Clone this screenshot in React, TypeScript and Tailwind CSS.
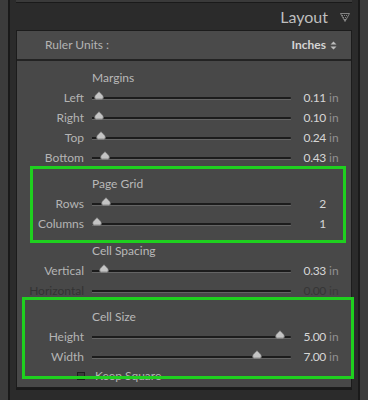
import React from "react";

type Row = { label: string; pos?: number; value: string; unit?: boolean; dim?: boolean };

const font = { fontFamily: "Lato, 'Liberation Sans', sans-serif" };

function Thumb() {
  return (
    <svg width="10" height="9" viewBox="0 0 10 9" className="absolute" style={{ top: -6 }}>
      <path d="M5 0.5 C6.5 2.5 9.5 4 9.5 6.2 Q9.5 8.5 7.5 8.5 L2.5 8.5 Q0.5 8.5 0.5 6.2 C0.5 4 3.5 2.5 5 0.5Z" fill="#c4c4c4" stroke="#5a5a5a" strokeWidth="0.6" />
      <path d="M1 6.5 Q1 8 2.5 8 L7.5 8 Q9 8 9 6.5" fill="none" stroke="#8a8a8a" strokeWidth="1" />
    </svg>
  );
}

function SliderRow({ label, pos, value, unit = true, dim = false }: Row) {
  return (
    <div className="flex h-[20px] shrink-0 items-center">
      <div className={`w-[67px] text-right text-[12px] ${dim ? "text-[#333333]" : "text-[#b4b4b4]"}`}>{label}</div>
      <div className="relative ml-[8px] h-[3px] w-[199px]">
        <div className="absolute left-0 right-0 top-0 h-[2px] rounded-r-full bg-[#1c1c1c]" />
        <div className="absolute left-0 right-0 top-[2px] h-[1px] rounded-r-full bg-[#646464]" />
        {pos !== undefined && (
          <div className="absolute" style={{ left: `calc(${pos * 100}% - 5px)` }}>
            <Thumb />
          </div>
        )}
      </div>
      <div className={`w-[35px] text-right text-[12px] tracking-[-0.3px] ${dim ? "text-[#363636]" : "text-[#d6d6d6]"}`}>
        {value}
      </div>
      {unit && <div className={`ml-[3px] text-[12px] ${dim ? "text-[#3a3a3a]" : "text-[#909090]"}`}>in</div>}
    </div>
  );
}

function Header({ children }: { children: React.ReactNode }) {
  return (
    <div className="flex h-[20px] shrink-0 items-center pl-[75px] text-[12px] text-[#b8b8b8]">{children}</div>
  );
}

export default function App() {
  return (
    <div className="relative flex h-[400px] w-[368px] overflow-hidden bg-[#3c3c3c]" style={font}>
      <div className="w-[8px]" />
      <div className="w-[2px] bg-[#1a1a1a]" />
      <div className="flex flex-1 flex-col bg-[#2b2b2b] px-[6px]">
        <div className="h-[3px] border-b border-[#1a1a1a] bg-[#3a3a3a]" />
        <div className="flex h-[27px] items-center justify-end pr-[2px]">
          <span className="text-[16px] text-[#bebebe]">Layout</span>
          <svg width="10" height="9" viewBox="0 0 10 9" className="ml-[12px] mt-[1px]">
            <path d="M0.5 0.5 L9.5 0.5 L5 8.5 Z" fill="none" stroke="#9a9a9a" strokeWidth="0.8" />
            <line x1="2" y1="2.5" x2="8" y2="2.5" stroke="#9a9a9a" strokeWidth="0.8" strokeDasharray="1 1" />
            <line x1="3" y1="4.5" x2="7" y2="4.5" stroke="#9a9a9a" strokeWidth="0.8" strokeDasharray="1 1" />
            <line x1="4" y1="6.5" x2="6" y2="6.5" stroke="#9a9a9a" strokeWidth="0.8" />
          </svg>
        </div>
        <div className="flex h-[358px] flex-col overflow-hidden border border-[#1c1c1c] bg-[#484848]">
          <div className="flex h-[30px] shrink-0 items-center border-b-2 border-[#232323] bg-[#4a4a4a] pl-[28px] pr-[14px]">
            <span className="text-[12px] text-[#b4b4b4]">Ruler Units :</span>
            <span className="ml-auto text-[12px] font-bold text-[#d4d4d4]">Inches</span>
            <svg width="7" height="9" viewBox="0 0 7 9" className="ml-[4px]">
              <path d="M3.5 0.5 L6.5 3.5 L0.5 3.5 Z M3.5 8.5 L6.5 5.5 L0.5 5.5 Z" fill="#bdbdbd" />
            </svg>
          </div>
          <div className="flex flex-col pt-[7px]">
            <Header>Margins</Header>
            <SliderRow label="Left" pos={0.035} value="0.11" />
            <SliderRow label="Right" pos={0.035} value="0.10" />
            <SliderRow label="Top" pos={0.045} value="0.24" />
            <SliderRow label="Bottom" pos={0.065} value="0.43" />
            <div className="h-[6px] shrink-0" />
            <Header>Page Grid</Header>
            <SliderRow label="Rows" pos={0.07} value="2" unit={false} />
            <SliderRow label="Columns" pos={0.025} value="1" unit={false} />
            <div className="h-[7px] shrink-0" />
            <Header>Cell Spacing</Header>
            <SliderRow label="Vertical" pos={0.06} value="0.33" />
            <SliderRow label="Horizontal" value="0.00" dim />
            <div className="h-[6px] shrink-0" />
            <Header>Cell Size</Header>
            <SliderRow label="Height" pos={0.945} value="5.00" />
            <SliderRow label="Width" pos={0.83} value="7.00" />
            <div className="flex h-[18px] shrink-0 items-center pl-[60px]">
              <div className="h-[8px] w-[8px] border border-[#1e1e1e] bg-[#3a3a3a]" />
              <span className="ml-[10px] text-[12px] text-[#b4b4b4]">Keep Square</span>
            </div>
          </div>
        </div>
        <div className="h-[2px] bg-[#1a1a1a]" />
      </div>
      <div className="w-[2px] bg-[#1a1a1a]" />
      <div className="w-[8px]" />

      <div className="pointer-events-none absolute left-[30px] top-[166px] h-[77px] w-[316px] border-[3px] border-[#1fd01f]" />
      <div className="pointer-events-none absolute left-[22px] top-[297px] h-[82px] w-[332px] border-[3px] border-[#1fd01f]" />
    </div>
  );
}
